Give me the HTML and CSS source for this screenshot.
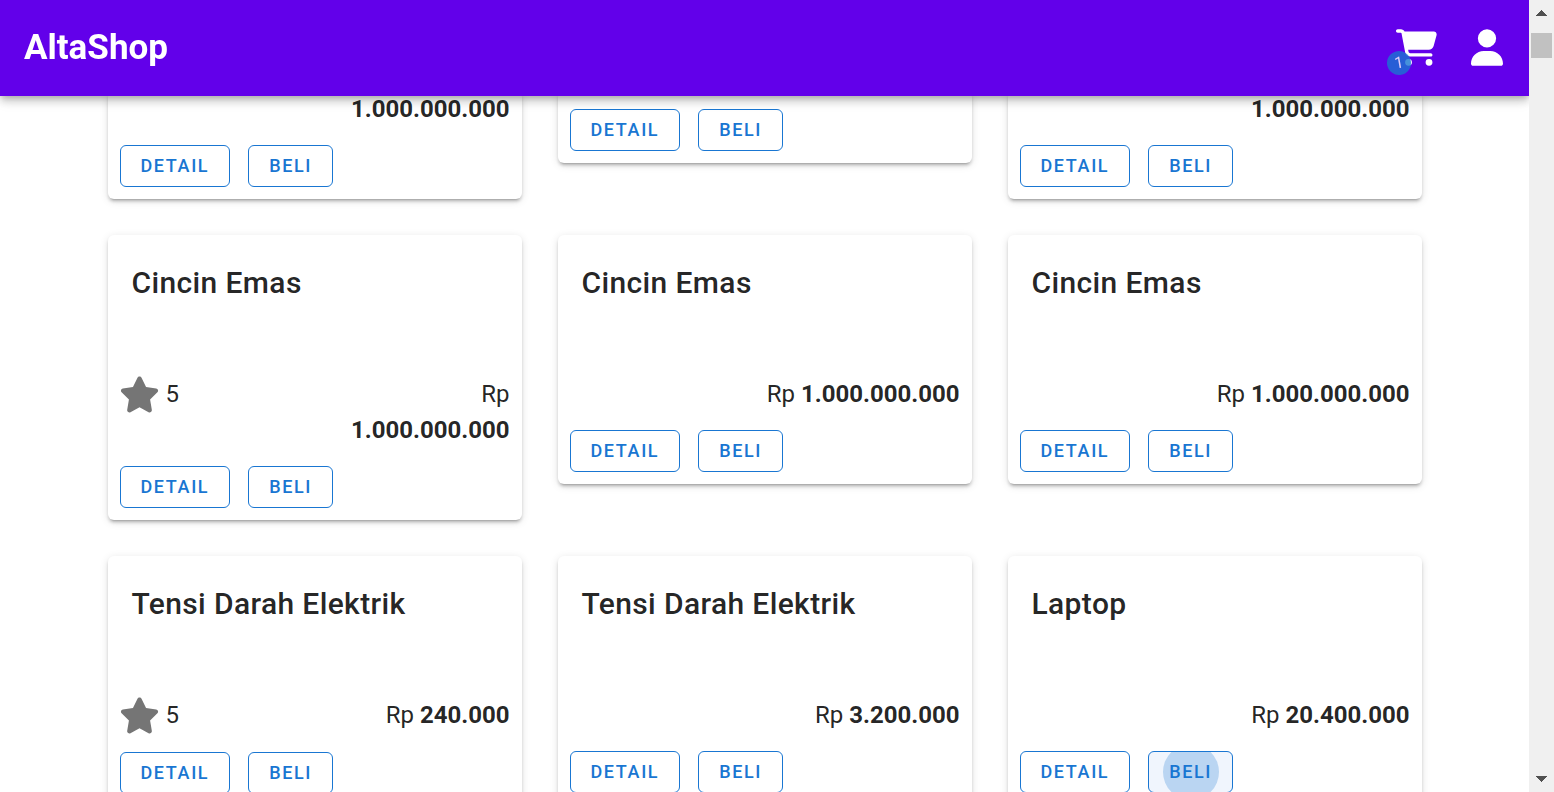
FILE: index.html
```html
<!DOCTYPE html>
<html lang="id">
<head>
<meta charset="utf-8">
<title>AltaShop</title>
<link rel="stylesheet" href="styles.css">
</head>
<body>
<svg class="sprite" aria-hidden="true">
  <symbol id="star" viewBox="18 -6 540 526"><path d="M316.9 18C311.6 7 300.4 0 288.1 0s-23.4 7-28.8 18L195 150.3 51.4 171.5c-12 1.8-22 10.2-25.7 21.7s-.7 24.2 7.9 32.7L137.8 329 113.2 474.7c-2 12 3 24.2 12.9 31.3s23 8 33.8 2.3l128.3-68.5 128.3 68.5c10.8 5.7 23.9 4.9 33.8-2.3s14.9-19.3 12.9-31.3L438.5 329 542.7 225.9c8.6-8.5 11.7-21.2 7.9-32.7s-13.7-19.9-25.7-21.7L381.2 150.3 316.9 18z"/></symbol>
</svg>
<div class="app">
  <header class="bar">
    <a class="brand" href="#">AltaShop</a>
    <div class="actions">
      <button class="icon-btn" type="button" aria-label="Keranjang">
        <svg class="cart" viewBox="0 0 576 512"><path d="M0 24C0 10.7 10.7 0 24 0H69.5c22 0 41.5 12.8 50.6 32h411c26.3 0 45.5 25 38.6 50.4l-41 152.3c-8.5 31.4-37 53.3-69.5 53.3H170.7l5.4 28.5c2.2 11.3 12.1 19.5 23.6 19.5H488c13.3 0 24 10.7 24 24s-10.7 24-24 24H199.7c-34.6 0-64.3-24.6-70.7-58.5L77.4 54.5c-.7-3.8-4-6.5-7.9-6.5H24C10.7 48 0 37.3 0 24zM128 464a48 48 0 1 1 96 0 48 48 0 1 1 -96 0zm336-48a48 48 0 1 1 0 96 48 48 0 1 1 0-96z"/></svg>
        <span class="badge">1</span>
      </button>
      <button class="icon-btn" type="button" aria-label="Akun">
        <svg class="user" viewBox="0 0 448 512"><path d="M224 256A128 128 0 1 0 224 0a128 128 0 1 0 0 256zm-45.7 48C79.8 304 0 383.8 0 482.3C0 498.7 13.3 512 29.7 512H418.3c16.4 0 29.7-13.3 29.7-29.7C448 383.8 368.2 304 269.7 304H178.3z"/></svg>
      </button>
    </div>
  </header>
  <main class="products">
    <article class="card">
      <p class="price"><b>1.000.000.000</b></p>
      <div class="buttons"><button class="btn" type="button">DETAIL</button><button class="btn" type="button">BELI</button></div>
    </article>
    <article class="card">
      <div class="buttons"><button class="btn" type="button">DETAIL</button><button class="btn" type="button">BELI</button></div>
    </article>
    <article class="card">
      <p class="price"><b>1.000.000.000</b></p>
      <div class="buttons"><button class="btn" type="button">DETAIL</button><button class="btn" type="button">BELI</button></div>
    </article>

    <article class="card">
      <h2 class="name">Cincin Emas</h2>
      <div class="info"><span class="rating"><svg class="star"><use href="#star"/></svg>5</span><p class="price">Rp <b>1.000.000.000</b></p></div>
      <div class="buttons"><button class="btn" type="button">DETAIL</button><button class="btn" type="button">BELI</button></div>
    </article>
    <article class="card">
      <h2 class="name">Cincin Emas</h2>
      <div class="info"><p class="price">Rp <b>1.000.000.000</b></p></div>
      <div class="buttons"><button class="btn" type="button">DETAIL</button><button class="btn" type="button">BELI</button></div>
    </article>
    <article class="card">
      <h2 class="name">Cincin Emas</h2>
      <div class="info"><p class="price">Rp <b>1.000.000.000</b></p></div>
      <div class="buttons"><button class="btn" type="button">DETAIL</button><button class="btn" type="button">BELI</button></div>
    </article>

    <article class="card">
      <h2 class="name">Tensi Darah Elektrik</h2>
      <div class="info"><span class="rating"><svg class="star"><use href="#star"/></svg>5</span><p class="price">Rp <b>240.000</b></p></div>
      <div class="buttons"><button class="btn" type="button">DETAIL</button><button class="btn" type="button">BELI</button></div>
    </article>
    <article class="card">
      <h2 class="name">Tensi Darah Elektrik</h2>
      <div class="info"><p class="price">Rp <b>3.200.000</b></p></div>
      <div class="buttons"><button class="btn" type="button">DETAIL</button><button class="btn" type="button">BELI</button></div>
    </article>
    <article class="card">
      <h2 class="name">Laptop</h2>
      <div class="info"><p class="price">Rp <b>20.400.000</b></p></div>
      <div class="buttons"><button class="btn" type="button">DETAIL</button><button class="btn btn-pressed" type="button"><span class="ripple"></span>BELI</button></div>
    </article>
  </main>
</div>
<div class="scrollbar" aria-hidden="true">
  <svg class="arrow" viewBox="0 0 11 6"><path d="M5 0h1v1h1v1h1v1h1v1h1v1h1v1H0V5h1V4h1V3h1V2h1V1h1z"/></svg>
  <div class="track"><div class="thumb"></div></div>
  <svg class="arrow" viewBox="0 0 11 6"><path d="M5 6h1V5h1V4h1V3h1V2h1V1h1V0H0v1h1v1h1v1h1v1h1v1h1z"/></svg>
</div>
</body>
</html>
```

FILE: styles.css
```css
* { box-sizing: border-box; }

body {
  margin: 0;
  height: 100vh;
  overflow: hidden;
  display: grid;
  grid-template-columns: minmax(0, 1fr) 25px;
  background: #fff;
  color: rgba(0, 0, 0, 0.87);
  font-family: Roboto, "Liberation Sans", sans-serif;
  font-size: 24px;
  line-height: 36px;
}

h2, p { margin: 0; }

.sprite { display: none; }

.app {
  height: 100vh;
  overflow: hidden;
}

.bar {
  position: sticky;
  top: 0;
  z-index: 2;
  display: flex;
  align-items: center;
  justify-content: space-between;
  height: 96px;
  padding: 0 26px 0 24px;
  background: #6200ea;
  box-shadow: 0 3px 6px -2px rgba(0, 0, 0, 0.2), 0 6px 8px rgba(0, 0, 0, 0.14), 0 2px 15px rgba(0, 0, 0, 0.12);
}

.brand {
  color: #fff;
  font-size: 35px;
  font-weight: 700;
  line-height: 48px;
  text-decoration: none;
}

.actions {
  display: flex;
  align-items: center;
  gap: 34px;
  padding-bottom: 1px;
}

.icon-btn {
  position: relative;
  display: flex;
  padding: 0;
  border: 0;
  background: none;
  color: #fff;
}

.icon-btn svg { height: 37px; fill: currentColor; }
.cart { width: 41px; }
.user { width: 32px; }

.badge {
  position: absolute;
  left: -9px;
  bottom: -9px;
  width: 24px;
  height: 24px;
  border-radius: 50%;
  background: #1976d2;
  font: 400 16px/24px Roboto, sans-serif;
  text-align: center;
  opacity: 0.8;
  transform: rotate(-10deg);
}

.products {
  display: grid;
  grid-template-columns: repeat(3, minmax(0, 1fr));
  align-items: start;
  gap: 36px;
  max-width: 1350px;
  margin: -5px auto 0;
  padding: 0 18px;
}

.card {
  padding: 0 12px 12px;
  border-radius: 6px;
  background: #fff;
  box-shadow: 0 4px 2px -3px rgba(0, 0, 0, 0.2), 0 3px 3px rgba(0, 0, 0, 0.14), 0 2px 8px rgba(0, 0, 0, 0.12);
}

.name {
  padding: 24px 12px 69px;
  font-size: 30px;
  font-weight: 500;
  line-height: 48px;
  letter-spacing: 0.0125em;
}

.info {
  display: flex;
  align-items: flex-start;
  gap: 12px;
}

.info > * { flex: 1 1 0; }

.rating {
  display: flex;
  gap: 7px;
}

.star {
  width: 39px;
  height: 37px;
  fill: #757575;
}

.price { text-align: right; }

.price b { font-weight: 700; }

.buttons {
  display: flex;
  gap: 18px;
  padding-top: 18px;
}

.btn {
  position: relative;
  overflow: hidden;
  height: 42px;
  padding: 0 20px;
  border: 1px solid #1976d2;
  border-radius: 6px;
  background: transparent;
  color: #1976d2;
  font: 500 18px/24px Roboto, sans-serif;
  letter-spacing: 0.09em;
}

.btn-pressed { background: #f0f5fd; }

.ripple {
  position: absolute;
  top: 50%;
  left: 50%;
  width: 56px;
  height: 56px;
  border-radius: 50%;
  background: rgba(25, 118, 210, 0.25);
  transform: translate(-50%, -50%);
}

.scrollbar {
  display: flex;
  flex-direction: column;
  align-items: center;
  padding: 10px 2px;
  background: #f0f0f0;
}

.arrow {
  width: 11px;
  height: 6px;
  fill: #505050;
  shape-rendering: crispEdges;
}

.track {
  flex: 1;
  align-self: stretch;
  padding-top: 17px;
}

.thumb {
  height: 25px;
  background: #c1c1c1;
}
```
